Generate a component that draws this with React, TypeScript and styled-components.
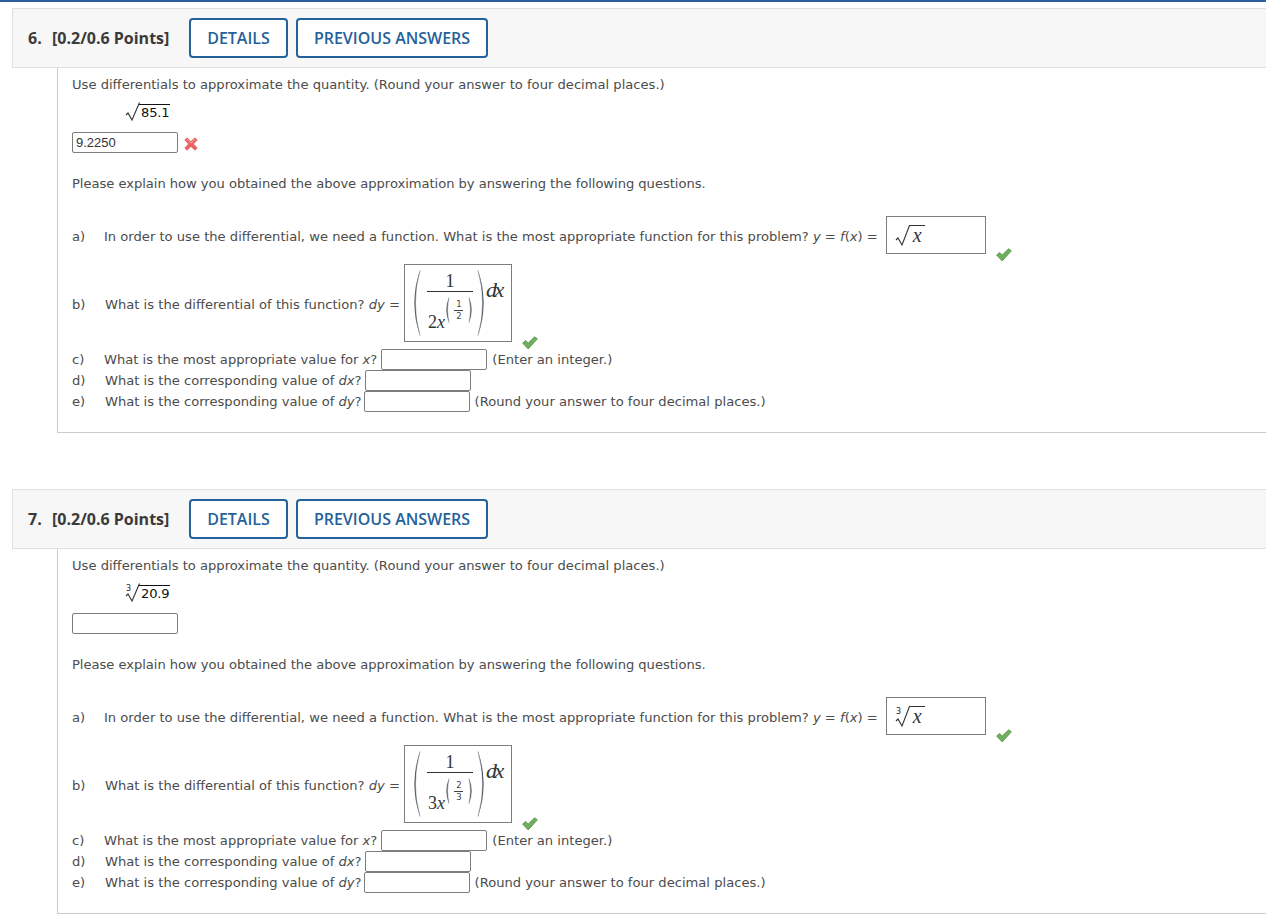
import styled, { createGlobalStyle } from "styled-components";

const GlobalStyle = createGlobalStyle`
  html, body {
    margin: 0;
    padding: 0;
    background: #fff;
    overflow: hidden;
  }
`;

const Page = styled.div`
  width: 1266px;
  height: 918px;
  overflow: hidden;
  border-top: 2px solid #2d5c9f;
  box-sizing: border-box;
  padding: 6px 0 0 12px;
  font-family: "DejaVu Sans", Verdana, sans-serif;
  font-size: 13.12px;
  color: #4c4c4c;
`;

const Question = styled.section`
  margin-bottom: 56px;
`;

const Header = styled.header`
  display: flex;
  align-items: center;
  height: 60px;
  box-sizing: border-box;
  background: #f7f7f7;
  border: 1px solid #dfdfdf;
  border-right: 0;
  padding-left: 15px;
  font-family: "Open Sans", "Noto Sans", sans-serif;
`;

const Number = styled.span`
  width: 24px;
  font-size: 16px;
  font-weight: 700;
  color: #3a3a3a;
`;

const Points = styled.span`
  width: 137px;
  font-size: 16px;
  font-weight: 700;
  color: #3a3a3a;
`;

const HeaderButton = styled.button<{ $wide?: boolean }>`
  box-sizing: border-box;
  height: 40px;
  width: ${({ $wide }) => ($wide ? "192px" : "99px")};
  margin-right: 8px;
  background: #fff;
  border: 2px solid #25619a;
  border-radius: 4px;
  color: #25619a;
  font-family: inherit;
  font-size: 16px;
  font-weight: 600;
  padding: 0;
`;

const Body = styled.div`
  margin-left: 45px;
  box-sizing: border-box;
  height: 365px;
  border-left: 1px solid #cccccc;
  border-bottom: 1px solid #cccccc;
  padding: 6px 0 0 14px;
`;

const Para = styled.p<{ $top?: number; $tight?: boolean }>`
  margin: ${({ $top }) => $top ?? 0}px 0 0;
  height: 20px;
  line-height: 22px;
  white-space: nowrap;
  letter-spacing: ${({ $tight }) => ($tight ? "-0.04px" : "0")};
`;

const RootRow = styled.div`
  margin: 8px 0 0 53px;
  height: 20px;
  display: flex;
  align-items: center;
`;

const RootValue = styled.span`
  display: inline-block;
  border-top: 1px solid #111;
  color: #111;
  line-height: 15px;
  padding: 0 1px 0 2px;
  margin-left: -1px;
  letter-spacing: -0.2px;
`;

const AnswerRow = styled.div`
  margin-top: 10px;
  height: 21px;
  display: flex;
  align-items: center;
`;

const Field = styled.div<{ $width?: number; $left?: number }>`
  box-sizing: border-box;
  flex: none;
  width: ${({ $width }) => $width ?? 106}px;
  height: 21px;
  margin-left: ${({ $left }) => $left ?? 0}px;
  border: 1px solid #7d7d7d;
  border-radius: 2px;
  padding-left: 3px;
  font-family: "Liberation Sans", Arial, sans-serif;
  font-size: 13px;
  line-height: 19px;
  color: #333;
`;

const PartRow = styled.div<{ $top: number; $height: number }>`
  margin-top: ${({ $top }) => $top}px;
  height: ${({ $height }) => $height}px;
  display: flex;
  align-items: center;
  white-space: nowrap;
`;

const Letter = styled.span<{ $width: number; $low?: boolean }>`
  flex: none;
  width: ${({ $width }) => $width}px;
  padding-top: ${({ $low }) => ($low ? "2px" : "0")};
`;

const Prompt = styled.span<{ $low?: boolean }>`
  padding-top: ${({ $low }) => ($low ? "2px" : "0")};
`;

const Var = styled.i`
  font-style: italic;
`;

const Hint = styled.span`
  margin-left: 5px;
`;

const MathBox = styled.div<{ $width: number; $height: number; $left: number }>`
  box-sizing: border-box;
  flex: none;
  width: ${({ $width }) => $width}px;
  height: ${({ $height }) => $height}px;
  margin-left: ${({ $left }) => $left}px;
  border: 1px solid #7d7d7d;
  display: flex;
  align-items: center;
  font-family: "Liberation Serif", "Times New Roman", serif;
  font-size: 17px;
  color: #333;
`;

const RadicalMath = styled.div`
  display: flex;
  align-items: flex-start;
  padding: 8px 0 0 8px;
  height: 100%;
  box-sizing: border-box;
`;

const RadicalBody = styled.span`
  display: inline-block;
  border-top: 1px solid #333;
  font-style: italic;
  font-size: 20px;
  line-height: 19px;
  height: 20px;
  padding: 0 3px 0 4px;
  margin-left: -1px;
`;

const DiffMath = styled.div`
  display: flex;
  align-items: center;
  padding-left: 9px;
  height: 100%;
`;

const Fraction = styled.div`
  width: 46px;
  margin: 0 4px 3px 6px;
  display: flex;
  flex-direction: column;
  align-items: center;
`;

const Numerator = styled.div`
  height: 20px;
  line-height: 20px;
  font-size: 18px;
  border-bottom: 1px solid #333;
  width: 100%;
  text-align: center;
`;

const Denominator = styled.div`
  display: flex;
  align-items: flex-end;
  height: 40px;
  font-size: 18px;
  line-height: 20px;
`;

const Power = styled.div`
  display: flex;
  align-items: center;
  height: 26px;
  margin-bottom: 9px;
  margin-left: 1px;
`;

const MiniFraction = styled.div`
  display: flex;
  flex-direction: column;
  align-items: center;
  width: 10px;
  margin: 0 4px;
  font-family: "DejaVu Sans", sans-serif;
  font-size: 8.5px;
  line-height: 11px;
  color: #444;
`;

const MiniBar = styled.div`
  width: 9px;
  height: 1px;
  background: #444;
`;

const Dx = styled.span`
  align-self: flex-start;
  margin: 15px 0 0 2px;
  font-style: italic;
  font-size: 22px;
  line-height: 20px;
  letter-spacing: -2.5px;
`;

const CheckSlot = styled.span<{ $left: number; $drop: number }>`
  flex: none;
  display: flex;
  align-self: flex-end;
  margin-left: ${({ $left }) => $left}px;
  margin-bottom: ${({ $drop }) => -$drop}px;
`;

const CrossSlot = styled.span`
  display: flex;
  margin: 3px 0 0 6px;
`;

const Radical = ({ index, height = 16 }: { index?: string; height?: number }) => (
  <svg width="15" height={height + 5} viewBox={`0 0 15 ${height + 5}`} style={{ flex: "none", overflow: "visible" }}>
    {index && (
      <text x="1" y="8" fontSize="8" fontFamily="DejaVu Sans, sans-serif" fill="#222">
        {index}
      </text>
    )}
    <path
      d={`M1 ${height - 3} L3 ${height - 5} L7 ${height + 2} L14.5 0.5`}
      fill="none"
      stroke="#333"
      strokeWidth="1.1"
    />
  </svg>
);

const Paren = ({ right, height, width = 7 }: { right?: boolean; height: number; width?: number }) => {
  const mid = height / 2;
  const end = right ? 1 : width - 1;
  const far = right ? 2 * width - 2 : 2 - width;
  const inner = right ? far - 2 : far + 2;
  return (
    <svg width={width} height={height} viewBox={`0 0 ${width} ${height}`} style={{ flex: "none" }}>
      <path
        d={`M${end} 0.5 Q${far} ${mid} ${end} ${height - 0.5} Q${inner} ${mid} ${end} 0.5 Z`}
        fill="#4b5560"
        stroke="#4b5560"
        strokeWidth="0.3"
      />
    </svg>
  );
};

const Check = () => (
  <svg width="16" height="14" viewBox="0 0 16 14">
    <path
      d="M0.6 7 L3.6 4.6 L6.2 7 L12.6 0.8 L15.4 2.8 L6.2 13 Z"
      fill="#6fb05c"
      stroke="#558f48"
      strokeWidth="0.8"
      strokeLinejoin="round"
    />
  </svg>
);

const Cross = () => (
  <svg width="14" height="14" viewBox="0 0 14 14">
    <path
      d="M0.8 3 L3 0.8 L7 4.6 L11 0.8 L13.2 3 L9.4 7 L13.2 11 L11 13.2 L7 9.4 L3 13.2 L0.8 11 L4.6 7 Z"
      fill="#ee6262"
      stroke="#d94a4a"
      strokeWidth="0.6"
      strokeLinejoin="round"
    />
    <path d="M3 2.4 L7 6 L11 2.4" fill="none" stroke="#f8b4b4" strokeWidth="0.8" />
  </svg>
);

type QuestionData = {
  number: string;
  rootIndex?: string;
  radicand: string;
  answer: string;
  wrong?: boolean;
  fnIndex?: string;
  coefficient: string;
  powerTop: string;
  powerBottom: string;
};

const questions: QuestionData[] = [
  {
    number: "6.",
    radicand: "85.1",
    answer: "9.2250",
    wrong: true,
    coefficient: "2",
    powerTop: "1",
    powerBottom: "2",
  },
  {
    number: "7.",
    rootIndex: "3",
    radicand: "20.9",
    answer: "",
    fnIndex: "3",
    coefficient: "3",
    powerTop: "2",
    powerBottom: "3",
  },
];

const QuestionBlock = ({ q }: { q: QuestionData }) => (
  <Question>
    <Header>
      <Number>{q.number}</Number>
      <Points>[0.2/0.6 Points]</Points>
      <HeaderButton>DETAILS</HeaderButton>
      <HeaderButton $wide>PREVIOUS ANSWERS</HeaderButton>
    </Header>
    <Body>
      <Para>Use differentials to approximate the quantity. (Round your answer to four decimal places.)</Para>
      <RootRow>
        <Radical index={q.rootIndex} />
        <RootValue>{q.radicand}</RootValue>
      </RootRow>
      <AnswerRow>
        <Field>{q.answer}</Field>
        {q.wrong && (
          <CrossSlot>
            <Cross />
          </CrossSlot>
        )}
      </AnswerRow>
      <Para $top={20} $tight>
        Please explain how you obtained the above approximation by answering the following questions.
      </Para>

      <PartRow $top={23} $height={38}>
        <Letter $width={32} $low>
          a)
        </Letter>
        <Prompt $low>
          In order to use the differential, we need a function. What is the most appropriate function for this problem?{" "}
          <Var>y</Var> = <Var>f</Var>(<Var>x</Var>) =
        </Prompt>
        <MathBox $width={100} $height={38} $left={8}>
          <RadicalMath>
            <Radical index={q.fnIndex} height={18} />
            <RadicalBody>x</RadicalBody>
          </RadicalMath>
        </MathBox>
        <CheckSlot $left={10} $drop={8}>
          <Check />
        </CheckSlot>
      </PartRow>

      <PartRow $top={10} $height={78}>
        <Letter $width={33} $low>
          b)
        </Letter>
        <Prompt $low>
          What is the differential of this function? <Var>dy</Var> =
        </Prompt>
        <MathBox $width={108} $height={78} $left={4}>
          <DiffMath>
            <Paren height={66} />
            <Fraction>
              <Numerator>1</Numerator>
              <Denominator>
                {q.coefficient}
                <Var>x</Var>
                <Power>
                  <Paren height={26} width={4} />
                  <MiniFraction>
                    {q.powerTop}
                    <MiniBar />
                    {q.powerBottom}
                  </MiniFraction>
                  <Paren height={26} width={4} right />
                </Power>
              </Denominator>
            </Fraction>
            <Paren height={66} right />
            <Dx>dx</Dx>
          </DiffMath>
        </MathBox>
        <CheckSlot $left={10} $drop={8}>
          <Check />
        </CheckSlot>
      </PartRow>

      <PartRow $top={7} $height={21}>
        <Letter $width={32}>c)</Letter>
        <Prompt>
          What is the most appropriate value for <Var>x</Var>?
        </Prompt>
        <Field $left={4} />
        <Hint>(Enter an integer.)</Hint>
      </PartRow>
      <PartRow $top={0} $height={21}>
        <Letter $width={33}>d)</Letter>
        <Prompt>
          What is the corresponding value of <Var>dx</Var>?
        </Prompt>
        <Field $left={3} />
      </PartRow>
      <PartRow $top={0} $height={21}>
        <Letter $width={33}>e)</Letter>
        <Prompt>
          What is the corresponding value of <Var>dy</Var>?
        </Prompt>
        <Field $left={2} />
        <Hint>(Round your answer to four decimal places.)</Hint>
      </PartRow>
    </Body>
  </Question>
);

export default function App() {
  return (
    <Page>
      <GlobalStyle />
      {questions.map((q) => (
        <QuestionBlock key={q.number} q={q} />
      ))}
    </Page>
  );
}
